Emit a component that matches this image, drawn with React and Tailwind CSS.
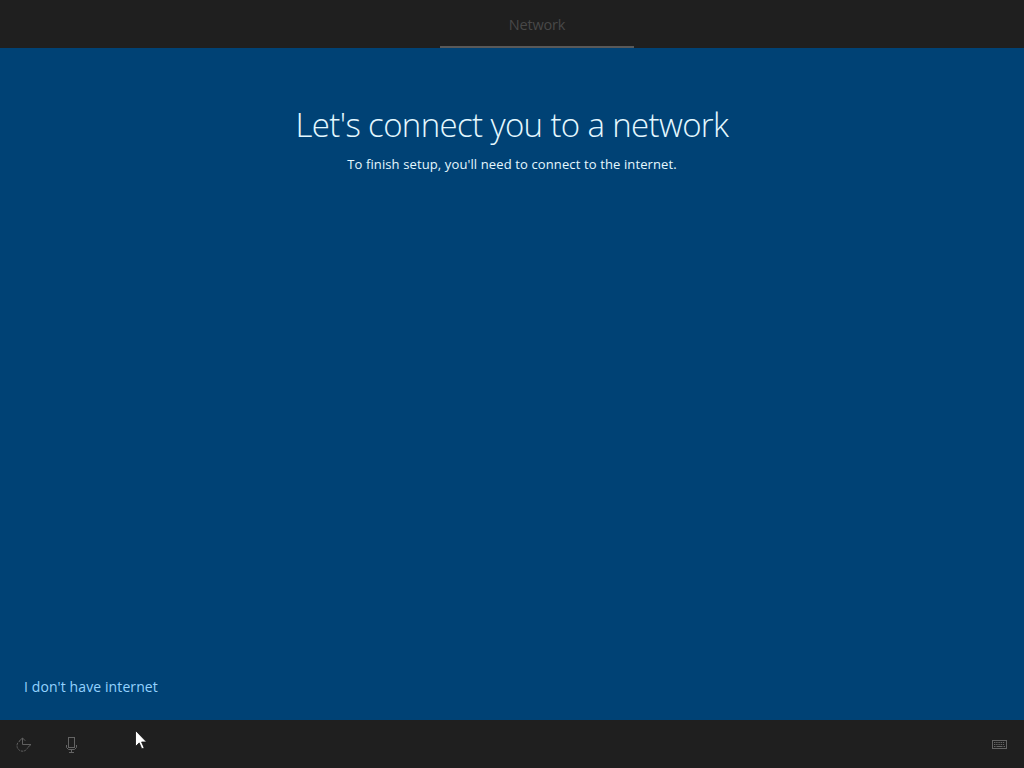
import React from 'react';

const EaseOfAccessIcon = () => (
    <svg width="18" height="18" viewBox="0 0 18 18" fill="none" stroke="#606060" strokeWidth="1">
        <path d="M5 4.8A5.5 5.5 0 1 0 12.4 12.2" strokeDasharray="2.4 0.8" />
        <path d="M7.5 2v6.5h8.5M4.2 5.2L7.5 2l2.8 2.8M12.5 11.8L16 8.5" />
    </svg>
);

const MicIcon = () => (
    <svg width="16" height="18" viewBox="0 0 16 18" fill="none" stroke="#646464" strokeWidth="1">
        <rect x="5.5" y="1.5" width="6" height="10" />
        <path d="M3.5 9v2.5l2 2h6l2-2V9M8.5 13.5v3M6 16.5h5" />
    </svg>
);

const KeyboardIcon = () => (
    <svg width="16" height="10" viewBox="0 0 16 10" fill="none" stroke="#646464" strokeWidth="1">
        <rect x="0.5" y="0.5" width="14" height="8" />
        <path d="M2 2.5h11M2 4.5h11" strokeDasharray="1.4 0.8" />
        <path d="M2 6.5h1.5M4.5 6.5h6M11.5 6.5H13" />
    </svg>
);

const Cursor = () => (
    <svg className="absolute left-[135px] top-[10px]" width="12" height="20" viewBox="0 0 12 20">
        <path d="M0.5 0.5v16l3.7-3.6 2.6 6 2.4-1-2.6-5.9h5z" fill="#fff" stroke="#111" strokeWidth="0.8" />
    </svg>
);

const App = () => {
    return (
        <div className="flex h-screen w-full flex-col overflow-hidden bg-[#004275] font-['Open_Sans','Noto_Sans',sans-serif]">
            {/* Step tabs */}
            <header className="flex h-12 shrink-0 bg-[#1f1f1f] pl-[440px]">
                <div className="flex w-[194px] items-center justify-center border-b-2 border-[#595959] text-[14.5px] text-[#484848]">
                    <span className="pt-[3px] tracking-[-0.15px]">Network</span>
                </div>
            </header>

            <main className="flex flex-1 flex-col items-center pt-[53px]">
                <h1 className="text-[33px] leading-[48px] font-light tracking-[-0.64px] whitespace-nowrap text-[#e4f8ff]">
                    Let's connect you to a network
                </h1>
                <p className="mt-[5px] text-[13px] leading-5 tracking-[0.12px] whitespace-nowrap text-[#e4f8ff]">
                    To finish setup, you'll need to connect to the internet.
                </p>
                <button className="mt-auto mb-[22px] ml-6 self-start text-[14px] leading-[22px] tracking-[0.1px] text-[#94d2ff]">
                    I don't have internet
                </button>
            </main>

            {/* System bar */}
            <footer className="relative flex h-12 shrink-0 items-center bg-[#1f1f1f] pt-[2px] pr-4 pl-[15px]">
                <button aria-label="Ease of access"><EaseOfAccessIcon /></button>
                <button className="ml-[30px]" aria-label="Microphone"><MicIcon /></button>
                <button className="ml-auto" aria-label="Keyboard"><KeyboardIcon /></button>
                <Cursor />
            </footer>
        </div>
    );
};

export default App;
